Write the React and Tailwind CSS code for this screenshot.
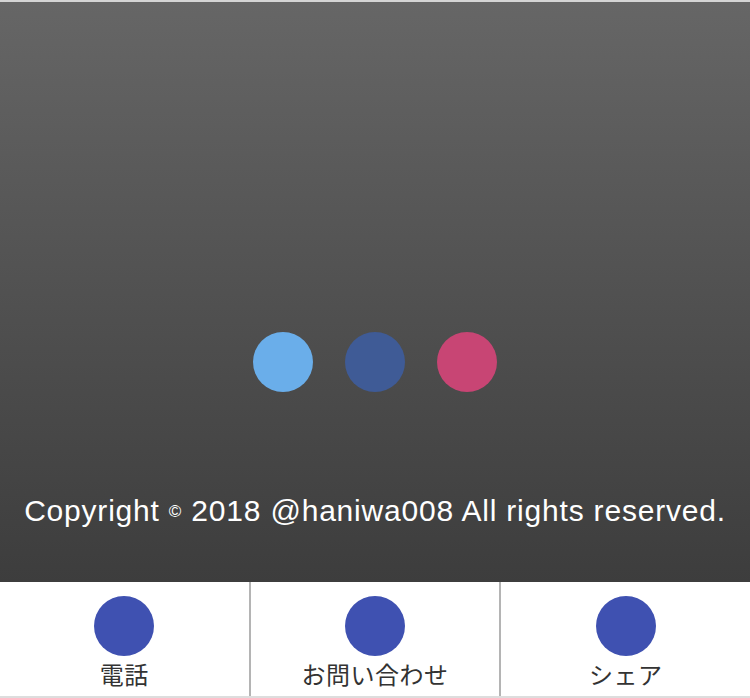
const circles = ["bg-[#6aaeea]", "bg-[#3f5b96]", "bg-[#c84574]"];

const navItems = ["電話", "お問い合わせ", "シェア"];

export default function App() {
  return (
    <div className="flex h-[698px] w-full flex-col bg-white font-['Noto_Sans_CJK_JP',sans-serif]">
      <div className="flex h-[582px] flex-col border-t-2 border-[#d4d4d4] bg-gradient-to-b from-[#666666] to-[#3d3d3d]">
        <div className="flex flex-1 items-end justify-center gap-8 pb-[104px]">
          {circles.map((c) => (
            <div key={c} className={`h-[60px] w-[60px] rounded-full ${c}`} />
          ))}
        </div>
        <p className="pb-[56px] text-center font-['Liberation_Sans',sans-serif] text-[30px] leading-none tracking-[0.8px] text-white">
          Copyright <span className="align-[4px] text-[17px]">©</span> 2018 @haniwa008 All rights reserved.
        </p>
      </div>

      <nav className="flex h-[116px] border-b-2 border-[#dddddd] bg-white">
        {navItems.map((label, i) => (
          <a
            key={label}
            href="#"
            className={`flex flex-1 flex-col items-center pt-[14px] text-[#333] ${
              i < 2 ? "border-r-2 border-[#b4b4b4]" : ""
            }`}
          >
            <span className="h-[60px] w-[60px] rounded-full bg-[#3f51b1]" />
            <span className="mt-[6px] text-[24px] leading-none tracking-[0.5px]">{label}</span>
          </a>
        ))}
      </nav>
    </div>
  );
}
